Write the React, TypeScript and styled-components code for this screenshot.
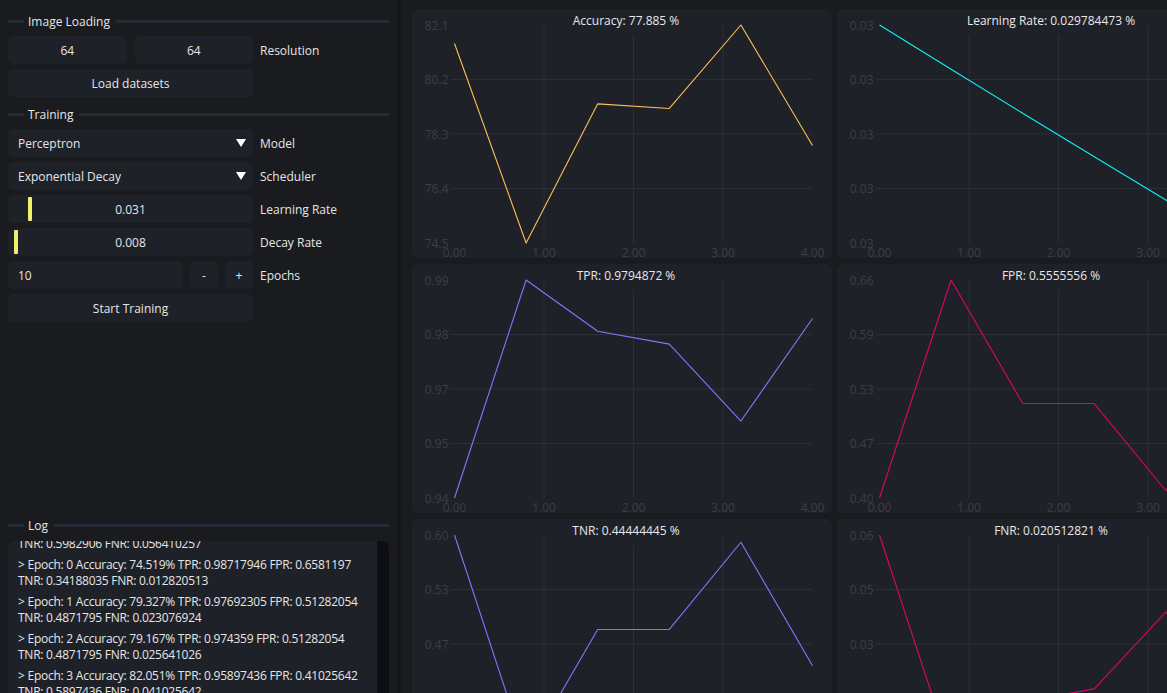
import React, { useLayoutEffect, useRef } from "react";
import styled, { createGlobalStyle } from "styled-components";

const FONT = `"Open Sans", "Noto Sans", sans-serif`;

const GlobalStyle = createGlobalStyle`
  html, body { margin: 0; padding: 0; background: #1a1b1e; overflow: hidden; }
  body { font-family: ${FONT}; font-size: 12px; color: #e6e6e6; }
  * { box-sizing: border-box; }
`;

const Shell = styled.div`
  display: flex;
  width: 100vw;
  height: 750px;
  overflow: hidden;
  background: #1a1b1e;
`;

const Sidebar = styled.aside`
  width: 401px;
  flex: none;
  height: 100%;
  padding: 12px 8px 9px 8px;
  border-right: 4px solid #141518;
  background: #1a1b1e;
  display: flex;
  flex-direction: column;
`;

const Section = styled.section<{ $top?: number; $push?: boolean }>`
  display: flex;
  flex-direction: column;
  gap: 5px;
  margin-top: ${(p) => (p.$push ? "auto" : `${p.$top ?? 0}px`)};
`;

const Heading = styled.div`
  display: flex;
  align-items: center;
  height: 18px;
  margin-bottom: 1px;
  &::before,
  &::after {
    content: "";
    height: 3px;
    background: #262a35;
  }
  &::before {
    width: 16px;
    flex: none;
  }
  &::after {
    flex: 1;
  }
`;

const HeadingText = styled.span`
  padding: 0 6px 0 4px;
  color: #e6e6e6;
`;

const Row = styled.div`
  display: grid;
  grid-template-columns: 245px 1fr;
  column-gap: 7px;
  height: 28px;
  align-items: center;
`;

const Pair = styled.div<{ $cols: string }>`
  display: grid;
  grid-template-columns: ${(p) => p.$cols};
  column-gap: ${(p) => (p.$cols.includes("28px") ? 7 : 8)}px;
  height: 28px;
`;

const Field = styled.div<{ $align?: "center" | "start" }>`
  position: relative;
  height: 28px;
  background: #1f2128;
  border-radius: 5px;
  display: flex;
  align-items: center;
  justify-content: ${(p) => (p.$align === "start" ? "flex-start" : "center")};
  padding: 0 10px;
  color: #e6e6e6;
  white-space: nowrap;
`;

const Combo = styled(Field)`
  justify-content: space-between;
  padding: 0 7px 0 10px;
`;

const Arrow = styled.span`
  width: 0;
  height: 0;
  border-left: 5.5px solid transparent;
  border-right: 5.5px solid transparent;
  border-top: 8px solid #ffffff;
  margin-top: -1px;
`;

const Grab = styled.span`
  position: absolute;
  top: 2px;
  bottom: 2px;
  width: 4px;
  border-radius: 1px;
  background: #f0f06c;
`;

const Label = styled.span`
  color: #e6e6e6;
  white-space: nowrap;
`;

const LogFrame = styled.div`
  display: flex;
  height: 200px;
  flex: none;
  margin-top: 1px;
  border-radius: 6px;
  background: #1f2128;
  overflow: hidden;
`;

const LogScroll = styled.div`
  position: relative;
  flex: 1;
  min-width: 0;
  overflow: hidden;
`;

const ScrollTrack = styled.div`
  width: 12px;
  flex: none;
  background: #0e0f12;
  border-radius: 0 6px 0 0;
`;

const LogList = styled.div`
  padding: 5px 0 5px 10px;
`;

const LogEntry = styled.div`
  margin-bottom: 5px;
`;

const LogLine = styled.div`
  line-height: 16px;
  white-space: nowrap;
  letter-spacing: -0.25px;
  color: #e6e6e6;
`;

const Main = styled.main`
  flex: 1;
  min-width: 0;
  padding: 9px 0 0 11px;
  overflow: hidden;
`;

const ChartGrid = styled.div`
  display: grid;
  grid-template-columns: repeat(2, 420px);
  grid-auto-rows: 249px;
  column-gap: 5px;
  row-gap: 6px;
`;

const Card = styled.div`
  position: relative;
  width: 420px;
  height: 249px;
  border-radius: 6px;
  background: #1f2128;
  overflow: hidden;
  svg {
    display: block;
  }
`;

const TitleBar = styled.div`
  position: absolute;
  top: 4px;
  left: 8px;
  right: 0;
  display: flex;
  justify-content: center;
  pointer-events: none;
`;

const Title = styled.span`
  background: #1f2128;
  line-height: 16px;
  padding: 0 2px 6px;
  color: #e8e8e8;
  white-space: nowrap;
`;

const W = 420;
const H = 249;
const L = 42.5;
const R = 400.5;
const T = 16;
const B = 234;
const XS = [0, 0.8, 1.6, 2.4, 3.2, 4.0];

type ChartProps = {
  title: string;
  data: number[];
  color: string;
  decimals: number;
};

function Chart({ title, data, color, decimals }: ChartProps) {
  const min = Math.min(...data);
  const max = Math.max(...data);
  const span = max - min || 1;
  const px = (u: number) => L + (u / 4) * (R - L);
  const py = (v: number) => T + ((max - v) / span) * (B - T);
  const pts = data.map((v, i) => `${px(XS[i]).toFixed(2)},${py(v).toFixed(2)}`).join(" ");
  const ticks = [0, 1, 2, 3, 4];
  return (
    <Card>
      <svg width={W} height={H} viewBox={`0 0 ${W} ${H}`}>
        {[1, 2, 3].map((i) => {
          const y = T + (i * (B - T)) / 4;
          return <line key={`h${i}`} x1={L - 4} x2={R} y1={y} y2={y} stroke="#2c2f38" strokeWidth={1} />;
        })}
        {[1, 2, 3].map((u) => (
          <line key={`v${u}`} x1={px(u)} x2={px(u)} y1={T} y2={B} stroke="#2c2f38" strokeWidth={1} />
        ))}
        {ticks.map((i) => (
          <text
            key={`y${i}`}
            x={L - 6}
            y={T + (i * (B - T)) / 4}
            textAnchor="end"
            dominantBaseline="central"
            fontFamily={FONT}
            fontSize={12}
            fill="#3b3e48"
          >
            {(max - (i * span) / 4).toFixed(decimals)}
          </text>
        ))}
        {ticks.map((u) => (
          <text
            key={`x${u}`}
            x={px(u)}
            y={B + 9}
            textAnchor="middle"
            dominantBaseline="central"
            fontFamily={FONT}
            fontSize={12}
            fill="#3b3e48"
          >
            {u.toFixed(2)}
          </text>
        ))}
        <polyline points={pts} fill="none" stroke={color} strokeWidth={1.1} strokeLinejoin="round" />
      </svg>
      <TitleBar>
        <Title>{title}</Title>
      </TitleBar>
    </Card>
  );
}

const lr = [0, 1, 2, 3, 4, 5].map((i) => 0.031 * Math.exp(-0.008 * i));

const charts: ChartProps[] = [
  { title: "Accuracy: 77.885 %", data: [81.41, 74.519, 79.327, 79.167, 82.051, 77.885], color: "#fcbf58", decimals: 1 },
  { title: "Learning Rate: 0.029784473 %", data: lr, color: "#10eef0", decimals: 2 },
  { title: "TPR: 0.9794872 %", data: [0.94358974, 0.98717946, 0.97692305, 0.974359, 0.95897436, 0.9794872], color: "#7a7aff", decimals: 2 },
  { title: "FPR: 0.5555556 %", data: [0.4017094, 0.6581197, 0.51282054, 0.51282054, 0.41025642, 0.5555556], color: "#dc0468", decimals: 2 },
  { title: "TNR: 0.44444445 %", data: [0.5982906, 0.34188035, 0.4871795, 0.4871795, 0.5897436, 0.44444445], color: "#7a7aff", decimals: 2 },
  { title: "FNR: 0.020512821 %", data: [0.056410257, 0.012820513, 0.023076924, 0.025641026, 0.041025642, 0.020512821], color: "#dc0468", decimals: 2 },
];

type Entry = { a: string; b: string; anchor?: boolean };

const logEntries: Entry[] = [
  { a: "> Epoch: 7 Accuracy: 80.929% TPR: 0.95128205 FPR: 0.4529915", b: "TNR: 0.5470085 FNR: 0.048717949" },
  { a: "> Epoch: 8 Accuracy: 81.090% TPR: 0.94871795 FPR: 0.4358974", b: "TNR: 0.5641026 FNR: 0.051282052" },
  { a: "> Epoch: 9 Accuracy: 81.410% TPR: 0.94358974 FPR: 0.4017094", b: "TNR: 0.5982906 FNR: 0.056410257" },
  { a: "> Epoch: 0 Accuracy: 74.519% TPR: 0.98717946 FPR: 0.6581197", b: "TNR: 0.34188035 FNR: 0.012820513", anchor: true },
  { a: "> Epoch: 1 Accuracy: 79.327% TPR: 0.97692305 FPR: 0.51282054", b: "TNR: 0.4871795 FNR: 0.023076924" },
  { a: "> Epoch: 2 Accuracy: 79.167% TPR: 0.974359 FPR: 0.51282054", b: "TNR: 0.4871795 FNR: 0.025641026" },
  { a: "> Epoch: 3 Accuracy: 82.051% TPR: 0.95897436 FPR: 0.41025642", b: "TNR: 0.5897436 FNR: 0.041025642" },
  { a: "> Epoch: 4 Accuracy: 77.885% TPR: 0.9794872 FPR: 0.5555556", b: "TNR: 0.44444445 FNR: 0.020512821" },
];

function Log() {
  const boxRef = useRef<HTMLDivElement>(null);
  const anchorRef = useRef<HTMLDivElement>(null);
  useLayoutEffect(() => {
    if (boxRef.current && anchorRef.current) {
      boxRef.current.scrollTop = anchorRef.current.offsetTop - 16;
    }
  }, []);
  return (
    <LogFrame>
      <LogScroll ref={boxRef}>
        <LogList>
          {logEntries.map((e, i) => (
            <LogEntry key={i} ref={e.anchor ? anchorRef : undefined}>
              <LogLine>{e.a}</LogLine>
              <LogLine>{e.b}</LogLine>
            </LogEntry>
          ))}
        </LogList>
      </LogScroll>
      <ScrollTrack />
    </LogFrame>
  );
}

function Slider({ value, frac }: { value: string; frac: number }) {
  return (
    <Field>
      <Grab style={{ left: 2 + frac * 237 }} />
      {value}
    </Field>
  );
}

export default function App() {
  return (
    <>
      <GlobalStyle />
      <Shell>
        <Sidebar>
          <Section>
            <Heading>
              <HeadingText>Image Loading</HeadingText>
            </Heading>
            <Row>
              <Pair $cols="1fr 1fr">
                <Field>64</Field>
                <Field>64</Field>
              </Pair>
              <Label>Resolution</Label>
            </Row>
            <Row>
              <Field>Load datasets</Field>
            </Row>
          </Section>
          <Section $top={8}>
            <Heading>
              <HeadingText>Training</HeadingText>
            </Heading>
            <Row>
              <Combo>
                Perceptron
                <Arrow />
              </Combo>
              <Label>Model</Label>
            </Row>
            <Row>
              <Combo>
                Exponential Decay
                <Arrow />
              </Combo>
              <Label>Scheduler</Label>
            </Row>
            <Row>
              <Slider value="0.031" frac={0.031 / 0.4} />
              <Label>Learning Rate</Label>
            </Row>
            <Row>
              <Slider value="0.008" frac={0.008 / 0.5} />
              <Label>Decay Rate</Label>
            </Row>
            <Row>
              <Pair $cols="1fr 28px 28px">
                <Field $align="start">10</Field>
                <Field>-</Field>
                <Field>+</Field>
              </Pair>
              <Label>Epochs</Label>
            </Row>
            <Row>
              <Field>Start Training</Field>
            </Row>
          </Section>
          <Section $push>
            <Heading>
              <HeadingText>Log</HeadingText>
            </Heading>
            <Log />
          </Section>
        </Sidebar>
        <Main>
          <ChartGrid>
            {charts.map((c) => (
              <Chart key={c.title} {...c} />
            ))}
          </ChartGrid>
        </Main>
      </Shell>
    </>
  );
}
